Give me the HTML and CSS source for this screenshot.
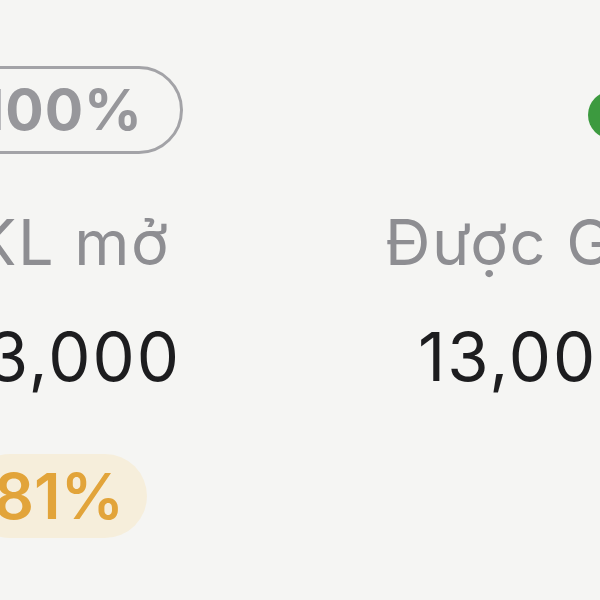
FILE: index.html
```html
<!doctype html>
<html lang="vi">
	<head>
		<meta charset="utf-8">
		<title>Lệnh - khối lượng</title>
		<link rel="stylesheet" href="styles.css">
	</head>
	<body>
		<div class="stats">
			<span class="badge badge-muted">100%</span>
			<span class="badge badge-ok">100%</span>

			<span class="label">KL mở</span>
			<span class="label">Được GD</span>

			<span class="value">13,000</span>
			<span class="value">13,000</span>

			<span class="badge badge-warn">81%</span>
		</div>
	</body>
</html>
```

FILE: styles.css
```css
html, body {
	margin: 0;
	height: 100%;
}

body {
	background: #f5f5f3;
	font-family: Inter, "Liberation Sans", sans-serif;
	overflow: hidden;
}

/* two columns: left one hugs the right edge, right one starts flush */
.stats {
	display: grid;
	grid-template-columns: 400px 400px;
	column-gap: 202px;
	margin-left: -217px;
	align-items: start;
}

.stats > :nth-child(odd) {
	justify-self: end;
}

.stats > :nth-child(even) {
	justify-self: start;
}

.badge {
	box-sizing: border-box;
	border-radius: 999px;
	white-space: nowrap;
}

.badge-muted {
	margin-top: 66px;
	height: 88px;
	line-height: 82px;
	padding: 0 37px 0 46px;
	border: 3px solid #a3a3a7;
	color: #97979b;
	font-size: 57px;
	font-weight: 700;
	letter-spacing: 1px;
}

.badge-ok {
	margin: 91px 0 0 203px;
	height: 48px;
	line-height: 48px;
	padding: 0 20px;
	background: #3c9a3f;
	color: #fff;
	font-size: 30px;
	font-weight: 700;
}

.label {
	margin-top: 57px;
	font-size: 63px;
	line-height: 1;
	letter-spacing: 1.5px;
	color: #8e8e92;
	white-space: nowrap;
}

.label:nth-child(odd) {
	margin-right: 13px;
}

.value {
	margin-top: 49px;
	font-size: 67px;
	line-height: 1;
	letter-spacing: 2px;
	color: #1d1d1f;
}

.value:nth-child(odd) {
	margin-right: 2px;
}

.value:nth-child(even) {
	margin-left: 33px;
}

.badge-warn {
	margin: 64px 36px 0 0;
	height: 84px;
	line-height: 84px;
	padding: 0 23px 0 26px;
	background: #f6eedb;
	color: #e2a43a;
	font-size: 63px;
	font-weight: 600;
}
```
